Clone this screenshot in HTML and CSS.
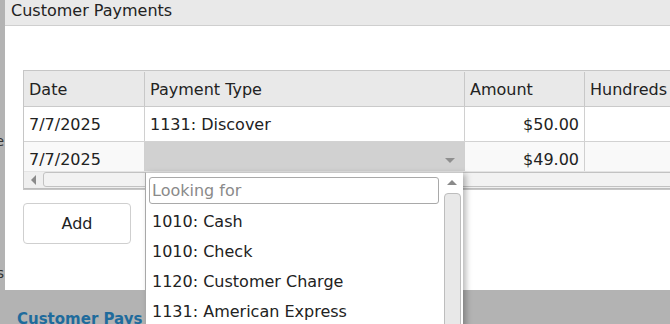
FILE: index.html
```html
<!DOCTYPE html>
<html>
<head>
<meta charset="utf-8">
<link rel="stylesheet" href="styles.css">
</head>
<body>
<div class="page">
  <div class="page-labels">
    <div class="page-label l1">Reference</div>
    <div class="page-label l2">Payments</div>
  </div>
  <a class="page-link">Customer Pays</a>
</div>

<div class="dialog">
  <div class="titlebar">Customer Payments</div>
  <div class="dialog-body">
    <div class="grid">
      <div class="grid-row head">
        <div class="cell c-date">Date</div>
        <div class="cell c-type">Payment Type</div>
        <div class="cell c-amt">Amount</div>
        <div class="cell c-hund">Hundreds</div>
      </div>
      <div class="grid-body">
        <div class="grid-row r1">
          <div class="cell c-date">7/7/2025</div>
          <div class="cell c-type">1131: Discover</div>
          <div class="cell c-amt num">$50.00</div>
          <div class="cell c-hund"></div>
        </div>
        <div class="grid-row r2">
          <div class="cell c-date">7/7/2025</div>
          <div class="cell c-type selected"><span class="caret"></span></div>
          <div class="cell c-amt num">$49.00</div>
          <div class="cell c-hund"></div>
        </div>
      </div>
      <div class="hscroll">
        <div class="hbtn"><span class="arrow-left"></span></div>
        <div class="hthumb"></div>
      </div>
    </div>
    <button class="add-btn">Add</button>
  </div>
</div>

<div class="popup">
  <div class="popup-main">
    <div class="search"><input type="text" placeholder="Looking for"></div>
    <ul class="options">
      <li>1010: Cash</li>
      <li>1010: Check</li>
      <li>1120: Customer Charge</li>
      <li>1131: American Express</li>
    </ul>
  </div>
  <div class="vscroll">
    <div class="vbtn"><span class="arrow-up"></span></div>
    <div class="vthumb"></div>
  </div>
</div>
</body>
</html>
```

FILE: styles.css
```css
html, body {
  margin: 0;
  padding: 0;
}
body {
  width: 670px;
  height: 324px;
  overflow: hidden;
  background: #b3b3b3;
  font-family: "DejaVu Sans", Verdana, sans-serif;
  color: #222;
  position: relative;
}

.page {
  display: flex;
  flex-direction: column;
  height: 324px;
}
.page-labels {
  width: 5px;
  display: flex;
  flex-direction: column;
}
.page-label {
  display: flex;
  justify-content: flex-end;
  white-space: nowrap;
  font-size: 14px;
  color: #333;
  width: 4px;
}
.l1 { margin-top: 133px; }
.l2 { margin-top: 116px; }
.page-link {
  margin-top: 29px;
  margin-left: 17px;
  font-weight: bold;
  font-size: 15px;
  color: #1f6b9c;
  white-space: nowrap;
}

.dialog {
  position: absolute;
  left: 5px;
  top: 0;
  width: 720px;
  height: 290px;
  background: #fff;
}
.titlebar {
  height: 26px;
  box-sizing: border-box;
  background: #e9e9e9;
  border-bottom: 1px solid #cfcfcf;
  padding-left: 6px;
  font-size: 16px;
  line-height: 21px;
  color: #222;
}
.dialog-body {
  padding: 44px 0 0 18px;
  display: flex;
  flex-direction: column;
  align-items: flex-start;
}

.grid {
  width: 700px;
  border: 1px solid #c6c6c6;
  display: flex;
  flex-direction: column;
  font-size: 16px;
}
.grid-body {
  height: 64px;
  overflow: hidden;
}
.grid-row {
  display: grid;
  grid-template-columns: 121px 320px 120px 1fr;
  border-bottom: 1px solid #d2d2d2;
}
.grid-row.head {
  height: 36px;
  background: #e9e9e9;
  border-bottom-color: #cacaca;
  padding-top: 1px;
  box-sizing: border-box;
}
.grid-row.r1 {
  height: 34px;
  background: #fff;
}
.grid-row.r2 {
  height: 34px;
  background: #f9f9f9;
}
.cell {
  border-right: 1px solid #d0d0d0;
  padding: 0 5px;
  display: flex;
  align-items: center;
  white-space: nowrap;
}
.head .cell {
  border-right-color: #c8c8c8;
}
.cell.num {
  justify-content: flex-end;
  padding-right: 5px;
}
.cell.selected {
  background: #d1d1d1;
  justify-content: flex-end;
  padding-right: 9px;
}
.caret {
  width: 0;
  height: 0;
  border-left: 5px solid transparent;
  border-right: 5px solid transparent;
  border-top: 5px solid #8f8f8f;
  margin-top: 2px;
}

.hscroll {
  height: 16px;
  background: #efefef;
  border-top: 1px solid #e4e4e4;
  display: flex;
  align-items: stretch;
  border-bottom: 1px solid #bdbdbd;
}
.hbtn {
  width: 18px;
  display: flex;
  align-items: center;
  justify-content: center;
}
.arrow-left {
  width: 0;
  height: 0;
  border-top: 5px solid transparent;
  border-bottom: 5px solid transparent;
  border-right: 5px solid #8a8a8a;
}
.hthumb {
  flex: 1;
  margin: 0 0 1px 1px;
  border: 1px solid #c2c2c2;
  border-radius: 3px;
  background: #f2f2f2;
}

.add-btn {
  margin-top: 13px;
  width: 108px;
  height: 41px;
  background: #fff;
  border: 1px solid #cfcfcf;
  border-radius: 4px;
  font-family: "DejaVu Sans", Verdana, sans-serif;
  font-size: 16px;
  color: #222;
  padding: 0;
}

.popup {
  position: absolute;
  left: 145px;
  top: 172px;
  width: 318px;
  height: 170px;
  background: #fff;
  border-left: 1px solid #a8a8a8;
  border-top: 1px solid #c8c8c8;
  box-sizing: border-box;
  box-shadow: 3px 2px 6px rgba(0, 0, 0, 0.28);
  display: flex;
}
.popup-main {
  flex: 1;
  display: flex;
  flex-direction: column;
  padding: 4px 0 0 3px;
}
.search input {
  width: 290px;
  height: 27px;
  box-sizing: border-box;
  border: 1px solid #a9a9a9;
  border-radius: 3px;
  font-family: "DejaVu Sans", Verdana, sans-serif;
  font-size: 16px;
  padding: 0 2px;
  color: #222;
  outline: none;
}
.search input::placeholder {
  color: #8a8a8a;
}
.options {
  list-style: none;
  margin: 0;
  padding: 3px 0 0 3px;
  font-size: 16px;
}
.options li {
  height: 30px;
  line-height: 30px;
  white-space: nowrap;
  color: #222;
}

.vscroll {
  width: 20px;
  margin-right: 1px;
  display: flex;
  flex-direction: column;
  align-items: center;
}
.vbtn {
  height: 18px;
  width: 100%;
  display: flex;
  align-items: center;
  justify-content: center;
}
.arrow-up {
  width: 0;
  height: 0;
  border-left: 5px solid transparent;
  border-right: 5px solid transparent;
  border-bottom: 5px solid #8a8a8a;
}
.vthumb {
  margin-top: 2px;
  width: 17px;
  flex: 1;
  box-sizing: border-box;
  border: 1px solid #bdbdbd;
  border-radius: 4px;
  background: #e8e8e8;
}
```
